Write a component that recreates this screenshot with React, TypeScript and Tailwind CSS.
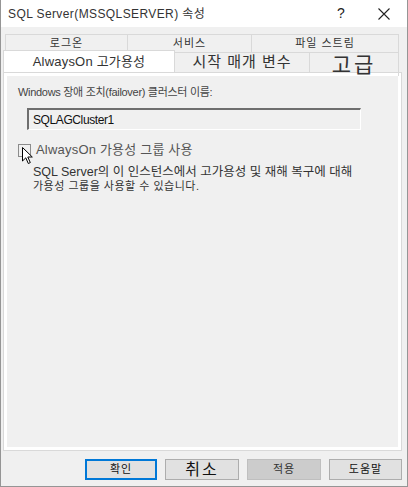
import React from "react";

const font = { fontFamily: '"Liberation Sans", "Noto Sans CJK KR", sans-serif' };

const CursorArrow: React.FC = () => (
  <svg width="12" height="18" viewBox="0 0 12 18" className="absolute left-[3px] top-[2px]">
    <path
      d="M0.5 0.5 L0.5 14 L3.8 10.8 L6.3 16.5 L8.3 15.6 L5.8 10 L10.3 10 Z"
      fill="#ffffff"
      stroke="#000000"
      strokeWidth="1"
      strokeLinejoin="miter"
    />
  </svg>
);

export default function App() {
  return (
    <div
      style={font}
      className="box-border w-[408px] h-[487px] bg-[#f0f0f0] border-x border-b border-[#959595] flex flex-col text-[#1e1e1e] select-none"
    >
      {/* Title bar */}
      <div className="h-[27px] shrink-0 bg-white flex items-center">
        <span className="flex-1 pl-[7px] pt-[1px] text-[12px] tracking-[0.4px] text-[#333]">
          SQL Server(MSSQLSERVER) 속성
        </span>
        <span className="w-[40px] text-center text-[14px] text-[#222]">?</span>
        <span className="w-[46px] flex items-center justify-center">
          <svg width="12" height="12" viewBox="0 0 12 12">
            <path d="M0.5 0.5 L11.5 11.5 M11.5 0.5 L0.5 11.5" stroke="#222" strokeWidth="1.1" />
          </svg>
        </span>
      </div>

      {/* Tab rows */}
      <div className="mt-[7px] shrink-0">
        <div className="ml-[4px] flex h-[18px] text-[11px] tracking-[1px] text-[#333]">
          <div className="w-[122px] border-t border-l border-[#d9d9d9] flex items-center justify-center">로그온</div>
          <div className="w-[124px] border-t border-l border-[#d9d9d9] flex items-center justify-center">서비스</div>
          <div className="w-[148px] border-t border-x border-[#d9d9d9] flex items-center justify-center">파일 스트림</div>
        </div>
        <div className="ml-[2px] flex h-[20px] relative z-10">
          <div className="w-[172px] h-[22px] -mt-[2px] bg-white border-t border-x border-[#d9d9d9] flex items-center justify-center text-[13px] text-[#333] tracking-[0.2px]">
            AlwaysOn 고가용성
          </div>
          <div className="w-[135px] border-t border-r border-[#d9d9d9] flex items-center justify-center text-[15px] tracking-[1px] text-[#333]">
            시작 매개 변수
          </div>
          <div className="w-[89px] border-t border-r border-[#d9d9d9] flex items-end justify-center overflow-hidden text-[21px] leading-[22px] text-[#333] tracking-[3px] -mb-[4px] pb-0">
            고급
          </div>
        </div>
      </div>

      {/* Panel */}
      <div className="ml-[2px] w-[399px] h-[379px] shrink-0 border border-[#d9d9d9] bg-white p-[3px] flex">
        <div className="flex-1 bg-[#f0f0f0] flex flex-col pl-[11px]">
          <div className="mt-[9px] text-[11px] leading-[14px] text-[#444] tracking-[-0.3px]">
            Windows 장애 조치(failover) 클러스터 이름:
          </div>
          <div className="ml-[9px] mt-[9px] w-[334px] h-[22px] border-t-2 border-l-2 border-b border-r border-t-[#6e6e6e] border-l-[#6e6e6e] border-b-white border-r-white bg-[#f0f0f0] flex items-center pl-[4px] text-[12px] text-[#111] tracking-[-0.4px]">
            SQLAGCluster1
          </div>
          <div className="mt-[13px] flex items-center h-[14px]">
            <div className="relative w-[13px] h-[13px] border border-[#8c8c8c] bg-[#f0f0f0] shrink-0">
              <CursorArrow />
            </div>
            <span className="ml-[5px] text-[13px] text-[#555] tracking-[0.2px]">AlwaysOn 가용성 그룹 사용</span>
          </div>
          <div className="ml-[15px] mt-[8px] text-[12.5px] leading-[15px] text-[#333]">
            SQL Server의 이 인스턴스에서 고가용성 및 재해 복구에 대해
          </div>
          <div className="ml-[15px] text-[11px] leading-[13px] text-[#333] tracking-[0.5px]">
            가용성 그룹을 사용할 수 있습니다.
          </div>
        </div>
      </div>

      {/* Buttons */}
      <div className="mt-[8px] flex justify-end gap-[8px] pr-[5px]">
        <button className="w-[72px] h-[21px] border-2 border-[#0078d7] bg-[#e1e1e1] text-[11px] text-[#111] flex items-center justify-center tracking-[1px]">
          확인
        </button>
        <button className="w-[74px] h-[21px] border border-[#adadad] bg-[#e1e1e1] text-[16px] text-[#111] flex items-center justify-center tracking-[2px]">
          취소
        </button>
        <button className="w-[74px] h-[21px] border border-[#bfbfbf] bg-[#cccccc] text-[11px] text-[#333] flex items-center justify-center tracking-[1px]">
          적용
        </button>
        <button className="w-[73px] h-[21px] border border-[#adadad] bg-[#e1e1e1] text-[11px] text-[#111] flex items-center justify-center tracking-[1px]">
          도움말
        </button>
      </div>
    </div>
  );
}
